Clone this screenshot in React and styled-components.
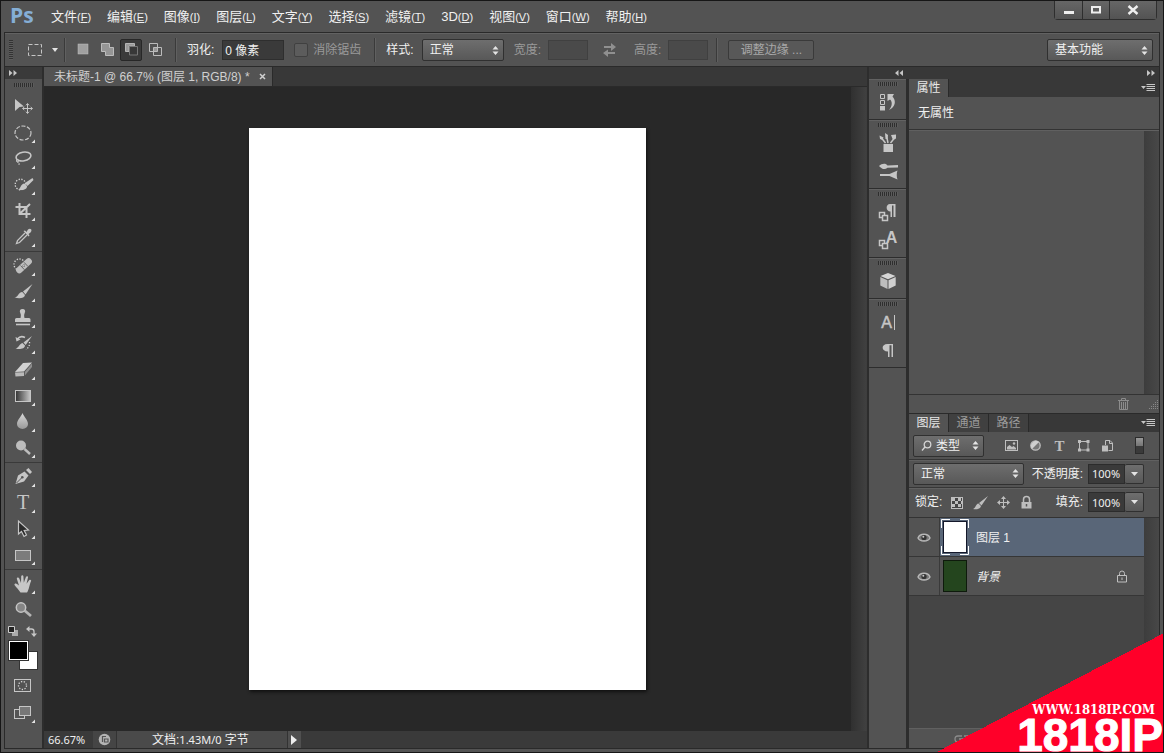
import { Fragment, useState } from "react";
import styled, { createGlobalStyle, css } from "styled-components";

const MENUS = [
    ["文件", "F"],
    ["编辑", "E"],
    ["图像", "I"],
    ["图层", "L"],
    ["文字", "Y"],
    ["选择", "S"],
    ["滤镜", "T"],
    ["3D", "D"],
    ["视图", "V"],
    ["窗口", "W"],
    ["帮助", "H"],
];

const dots = { fill: "none", stroke: "#d4d4d4", strokeWidth: 1.3, strokeDasharray: "1.3 1.5" };

const TOOLS = [
    [
        { name: "移动", single: true, art: (
            <>
                <path d="M5 5L14 12.5L9.5 13L5 17Z" fill="#c6c6c6" />
                <path d="M17.5 10V19M13 14.5H22" stroke="#c6c6c6" />
                <path d="M16 11.3L17.5 9.5L19 11.3M16 17.7L17.5 19.5L19 17.7M14.3 13L12.5 14.5L14.3 16M20.7 13L22.5 14.5L20.7 16" fill="none" stroke="#c6c6c6" />
            </>
        ) },
        { name: "椭圆选框", art: <ellipse cx="13" cy="13" rx="8" ry="7" fill="none" stroke="#c6c6c6" strokeWidth="1.2" strokeDasharray="4 1.6" /> },
        { name: "套索", art: (
            <>
                <ellipse cx="13.5" cy="10.5" rx="7.5" ry="4.3" transform="rotate(-10 13.5 10.5)" fill="none" stroke="#c6c6c6" strokeWidth="1.6" />
                <path d="M7.5 13C5.5 15 7 17 8.5 15.5C10 14 7 12.5 6.5 14.5C7 17 10 16 9 19" fill="none" stroke="#c6c6c6" />
            </>
        ) },
        { name: "快速选择", art: (
            <>
                <circle cx="10.5" cy="12.5" r="5.3" {...dots} />
                <path d="M22.5 6L15 11L17.500 14L23.500 8Z" fill="#c6c6c6" />
                <path d="M14.5 11.5L17.200 14.500C16.500 18 12 18.500 8 17.8C11 16.5 10.500 12 14.5 11.5Z" fill="#c6c6c6" />
            </>
        ) },
        { name: "裁剪", art: <path d="M9.500 5V16H20.5M5.500 9H16.5V20M10 15.500L20 6" fill="none" stroke="#c6c6c6" strokeWidth="2" /> },
        { name: "吸管", art: (
            <>
                <path d="M15 9L7.500 16.5L6.500 19.500L9.5 18.5L17 11" fill="none" stroke="#c6c6c6" strokeWidth="1.3" />
                <path d="M13.5 7L15 6.500L16.500 8L18 5.500Q20 4 21.300 5.500Q22 7 20.500 8.500L18.500 10L19.500 11.5L18.500 12.5Z" fill="#c6c6c6" />
            </>
        ) },
    ],
    [
        { name: "污点修复", art: (
            <>
                <circle cx="9.5" cy="11.5" r="5.5" {...dots} />
                <rect x="4.500" y="9.500" width="19" height="6.500" rx="3" transform="rotate(-43 14 12.8)" fill="#bdbdbd" />
                <path d="M10.5 12.5L14.5 16.8M14 9.300L18 13.500" stroke="#666" />
                <path d="M14 11V15M12 13H16" stroke="#777" strokeDasharray="1 1" />
            </>
        ) },
        { name: "画笔", art: (
            <>
                <path d="M22.500 5L13 12.500L15.500 15.500Z" fill="#c6c6c6" />
                <path d="M12.300 13L15 16C14.500 19.500 9 20 4.500 18.500C8.500 18 8 13.500 12.300 13Z" fill="#c6c6c6" />
            </>
        ) },
        { name: "仿制图章", art: (
            <>
                <path d="M12.500 4C15 4 15.800 6 14.700 8C14 9.500 14 11 14.500 13H19Q20.500 13 20.500 14.500V17H5V14.500Q5 13 6.500 13H10.500C11 11 11 9.500 10.300 8C9.200 6 10 4 12.500 4Z" fill="#c6c6c6" />
                <path d="M6 19.500H20" stroke="#c6c6c6" strokeWidth="1.600" />
            </>
        ) },
        { name: "历史记录画笔", art: (
            <>
                <path d="M22 5L13.500 11.500L15.700 14Z" fill="#c6c6c6" />
                <path d="M12.500 12L15 14.500C15 18 9 18.800 5.500 17.500C9 17 9 13 12.500 12Z" fill="#c6c6c6" />
                <path d="M15 6.500C12 5 9 6 7.500 8" fill="none" stroke="#c6c6c6" strokeWidth="1.500" />
                <path d="M5.500 6L6.500 10.500L10.500 8.500Z" fill="#c6c6c6" />
                <path d="M19.500 11C20 14 18.500 17 16 18.500" {...dots} />
            </>
        ) },
        { name: "橡皮擦", art: (
            <>
                <path d="M5 15L13 6L22 5.500L14 14.500Z" fill="#d2d2d2" />
                <path d="M5 15.600L14 15.200V19L5.500 19.500Z" fill="#b9b9b9" />
                <path d="M14.800 15L22 6.500V10L14.800 18.500Z" fill="#8d8d8d" />
            </>
        ) },
        { name: "渐变", art: <rect x="5.500" y="7.500" width="15" height="11" fill="url(#ramp)" stroke="#c6c6c6" /> },
        { name: "模糊", art: <path d="M12.500 4C14 8 18 11 18 15A5.500 5 0 0 1 7 15C7 11 11 8 12.500 4Z" fill="url(#drop)" /> },
        { name: "减淡", art: (
            <>
                <circle cx="11" cy="10.500" r="5" fill="#bdbdbd" />
                <path d="M14.500 14L20 19" stroke="#bdbdbd" strokeWidth="2.400" />
            </>
        ) },
    ],
    [
        { name: "钢笔", art: (
            <>
                <path d="M5.500 20L8 11.500L14.500 7.500L18.500 11.500L14 17.500Z" fill="#c6c6c6" />
                <path d="M16 6L18.500 4L22 8L20 10Z" fill="#c6c6c6" />
                <path d="M6.500 19L11.500 14" stroke="#555" />
                <circle cx="12.300" cy="13.200" r="1.300" fill="#555" />
            </>
        ) },
        { name: "横排文字", art: <text x="13" y="19" textAnchor="middle" fontFamily="Liberation Serif, serif" fontSize="20" fill="#c6c6c6">T</text> },
        { name: "路径选择", art: <path d="M8.500 5V18L11.500 15.500L14 20.500L16.500 19L14.200 14.500L18.500 14Z" fill="#2a2a2a" stroke="#c6c6c6" strokeWidth="1.200" /> },
        { name: "矩形", art: <rect x="5.500" y="8.500" width="15" height="10" fill="#7c7c7c" stroke="#c6c6c6" /> },
    ],
    [
        { name: "抓手", art: <path d="M10.500 21.500C9 19 6.500 16.500 4.500 14C4 12.500 6 12 7 13L9 14.500L6.800 7.800C6.800 6 8.800 6 9.300 7.500L11 12L11.200 5.200C11.500 3.800 13.200 3.800 13.400 5.200L13.800 11.800L16 5.800C16.800 4.600 18.200 5.200 18 6.500L16.500 12.700L19.300 9C20.500 8.200 21.600 9.200 21 10.300C19.500 13.500 19 19 17 21.500Z" fill="#c6c6c6" /> },
        { name: "缩放", single: true, art: (
            <>
                <circle cx="11" cy="10.500" r="4.700" fill="#858585" stroke="#c6c6c6" strokeWidth="1.500" />
                <path d="M14.500 13.500L21 19" stroke="#b5b5b5" strokeWidth="2.800" />
            </>
        ) },
    ],
];

const DOCK = [
    [
        { name: "历史记录", art: (
            <>
                <path d="M3.500 5.500H7.500V9.500H3.500ZM3.500 11.500H7.500V15.500H3.500Z" fill="none" stroke="#c6c6c6" />
                <path d="M3 17H8V21.500H3Z" fill="#c6c6c6" />
                <path d="M10.500 5H17L15.500 7.500C19.500 12 18.500 18 12 21C15.500 17 15.500 12.500 13 10.500L10.500 12Z" fill="#c6c6c6" />
            </>
        ) },
    ],
    [
        { name: "画笔预设", art: (
            <>
                <path d="M6.500 14H16V22H6.500Z" fill="#c6c6c6" />
                <path d="M8.500 13L4.500 8M11 13L9.500 6M13.500 13L17.500 8" stroke="#c6c6c6" strokeWidth="1.500" />
                <path d="M2.500 5.500L6.500 7.500L5.500 10L3 9ZM8 3L11 5L10.500 9H8.500ZM14 5L19 4.500V8.500L16 10Z" fill="#c6c6c6" />
            </>
        ) },
        { name: "画笔", art: (
            <>
                <path d="M2 8C5 5 9 5 10.500 7.500L21 7V9.500L10.500 9.800C8 12 5 11.500 2 8Z" fill="#c6c6c6" />
                <path d="M3 16H12.500L20.500 12.500C19.500 15 19.500 19 20.500 21.500L12.500 18H3Z" fill="#c6c6c6" />
            </>
        ) },
    ],
    [
        { name: "段落样式", art: (
            <>
                <path d="M18.500 5V18H16.500V6.500H15V18H13.500V12.500C8.500 12.500 8.500 5 13 5Z" fill="#c6c6c6" />
                <path d="M2.500 13.500H7.500V18.500H2.500Z" fill="none" stroke="#c6c6c6" strokeWidth="1.500" />
                <path d="M5.500 16.500H10.500V21.500H5.500Z" fill="#555" stroke="#c6c6c6" strokeWidth="1.500" />
            </>
        ) },
        { name: "字符样式", art: (
            <>
                <text x="14.500" y="16" textAnchor="middle" fontFamily="Liberation Sans, sans-serif" fontSize="16" fontWeight="700" fill="#c6c6c6">A</text>
                <path d="M2.500 13.500H7.500V18.500H2.500Z" fill="none" stroke="#c6c6c6" strokeWidth="1.500" />
                <path d="M5.500 16.500H10.500V21.500H5.500Z" fill="#555" stroke="#c6c6c6" strokeWidth="1.500" />
            </>
        ) },
    ],
    [
        { name: "3D 材质", art: (
            <>
                <path d="M11 5L18.500 8L11 11.300L3.500 8Z" fill="#d6d6d6" />
                <path d="M3.300 9L10.500 12.300V21L3.300 17.500Z" fill="#bdbdbd" />
                <path d="M18.700 9L11.500 12.300V21L18.700 17.500Z" fill="#cfcfcf" />
            </>
        ) },
    ],
    [
        { name: "字符", art: (
            <>
                <text x="9.500" y="19" textAnchor="middle" fontFamily="Liberation Sans, sans-serif" fontSize="16" stroke="#c6c6c6" strokeWidth="0.500" fill="#c6c6c6">A</text>
                <path d="M17.500 6V21" stroke="#c6c6c6" />
            </>
        ) },
        { name: "段落", art: <path d="M16 7V20H14.500V8.200H12.500V20H11V14.500C4 14.500 4 7 10.500 7Z" fill="#c6c6c6" /> },
    ],
];

const SELECTION_MODES = [
    ["新选区", <rect key="a" x="2" y="1" width="10" height="10" fill="#a0a0a0" stroke="#c0c0c0" strokeWidth=".500" />],
    ["添加到选区", <path key="b" d="M1.500 .500H9.500V4.500H13.500V12.500H5.500V8.500H1.500Z" fill="#959595" stroke="#bcbcbc" />],
    ["从选区减去", (
        <Fragment key="c">
            <path d="M1.500 .500H10.500V3H5V8.500H1.500Z" fill="#999" stroke="#b5b5b5" />
            <path d="M5.500 3.500H13.500V12H5.500Z" fill="#383838" stroke="#777" />
        </Fragment>
    )],
    ["与选区交叉", (
        <Fragment key="d">
            <path d="M5.500 4.500H9.500V8.500H5.500Z" fill="#999" />
            <path d="M1.500 .500H9.500V8.500H1.500ZM5.500 4.500H13.500V12.500H5.500Z" fill="none" stroke="#bcbcbc" />
        </Fragment>
    )],
];

const FILTERS = [
    ["像素图层", (
        <>
            <rect x="1.500" y="2.500" width="12" height="10" fill="none" stroke="#bebebe" />
            <path d="M3 11.500V9L5.500 7L8 9L9.500 8L12 10V11.500Z" fill="#bebebe" />
            <circle cx="10" cy="5.500" r="1.200" fill="#bebebe" />
        </>
    )],
    ["调整图层", (
        <>
            <circle cx="7.500" cy="7.500" r="4.700" fill="#777" stroke="#bebebe" strokeWidth="1.300" />
            <path d="M4 11A5 5 0 0 1 11 4Z" fill="#cfcfcf" />
        </>
    )],
    ["文字图层", <text x="7.500" y="12.500" textAnchor="middle" fontFamily="Liberation Serif, serif" fontWeight="700" fontSize="15" fill="#bebebe">T</text>],
    ["形状图层", (
        <>
            <path d="M4 3.500H11M4 12H11M3.500 4V11.500M12 4V11.500" stroke="#bebebe" />
            <path d="M2 2H5V5H2ZM10.500 2H13.500V5H10.500ZM2 10.500H5V13.500H2ZM10.500 10.500H13.500V13.500H10.500Z" fill="#bebebe" />
        </>
    )],
    ["智能对象", (
        <>
            <path d="M5.500 7V2.500H10L12.500 5V12.500H8.500M9.500 2.500V5.500H12.500" fill="none" stroke="#bebebe" />
            <path d="M2 7.500H8V13.500H2Z" fill="#bebebe" />
        </>
    )],
];

const LOCKS = [
    ["锁定透明像素", (
        <>
            <rect x="1.500" y="2.500" width="11" height="11" fill="#454545" stroke="#bebebe" />
            <path d="M2 3H5V6H2ZM8 3H11V6H8ZM5 6H8V9H5ZM11 6H12.500V9H11ZM2 9H5V12H2ZM8 9H11V12H8Z" fill="#bebebe" />
        </>
    )],
    ["锁定图像像素", <path d="M15 1L6 8L8.500 10.500ZM5.500 8.500L8 11C7.500 14.500 3 14.500 0 14C3 13 2.500 9 5.500 8.500Z" fill="#bebebe" />],
    ["锁定位置", (
        <>
            <path d="M7.500 2V13M2 7.500H13" stroke="#bebebe" />
            <path d="M5 4L7.500 1L10 4ZM5 11L7.500 14L10 11ZM4 5L1 7.500L4 10ZM11 5L14 7.500L11 10Z" fill="#bebebe" />
        </>
    )],
    ["锁定全部", (
        <>
            <path d="M4.500 7V4.500A3 3 0 0 1 10.500 4.500V7" fill="none" stroke="#bebebe" strokeWidth="1.500" />
            <path d="M2.500 7H12.500V13.500H2.500Z" fill="#bebebe" />
            <path d="M7.500 9V11.500" stroke="#555" strokeWidth="1.500" />
        </>
    )],
];

const Dropdown = ({ id, label, options, width, lens }) => (
    <SelectBox $width={width}>
        {lens && (
            <svg width="11" height="12" viewBox="0 0 11 12" fill="none" stroke="#d4d4d4" strokeWidth="1.300">
                <circle cx="6.500" cy="4.500" r="3.300" />
                <path d="M4 7L1 10.500" />
            </svg>
        )}
        <Select id={id} aria-label={label} defaultValue={options[0]}>
            {options.map((option) => <option key={option}>{option}</option>)}
        </Select>
        <svg width="7" height="9" viewBox="0 0 7 9" fill="#e4e4e4">
            <path d="M.500 3.500L3.500 0L6.500 3.500ZM.500 5.500L3.500 9L6.500 5.500Z" />
        </svg>
    </SelectBox>
);

const Percent = ({ id, label }) => (
    <PercentField>
        <label htmlFor={id}>{label}:</label>
        <PercentInput id={id} defaultValue="100%" />
        <ArrowButton aria-label={`${label}滑块`}>
            <svg width="7" height="4" viewBox="0 0 7 4" fill="#e4e4e4"><path d="M0 0H7L3.500 4Z" /></svg>
        </ArrowButton>
    </PercentField>
);

const PanelMenu = () => (
    <PlainButton aria-label="面板菜单">
        <svg width="14" height="9" viewBox="0 0 14 9">
            <path d="M0 2H5L2.500 5Z" fill="#c6c6c6" />
            <path d="M5.500 .500H14M5.500 2.500H14M5.500 4.500H14M5.500 6.500H14" stroke="#c6c6c6" />
        </svg>
    </PlainButton>
);

const Chevrons = ({ left }) => (
    <svg width="8" height="6" viewBox="0 0 8 6" fill="#c6c6c6">
        <path d={left ? "M3.500 0V6L0 3ZM8 0V6L4.500 3Z" : "M0 0V6L3.500 3ZM4.500 0V6L8 3Z"} />
    </svg>
);

const Eye = () => (
    <svg width="14" height="11" viewBox="0 0 14 11">
        <path d="M1 6C3 1 11 1 13 6C11 10 3 10 1 6Z" fill="#777" stroke="#b8b8b8" strokeWidth="1.400" />
        <circle cx="7" cy="5.500" r="2.600" fill="#333" />
        <circle cx="6.300" cy="4.800" r="1" fill="#c8c8c8" />
    </svg>
);

const TitleBar = () => (
    <Title>
        <Logo>Ps</Logo>
        <Menus>
            {MENUS.map(([text, key]) => (
                <MenuButton key={key}>{text}<small>(<u>{key}</u>)</small></MenuButton>
            ))}
        </Menus>
        <WindowButtons>
            <WindowButton $width={28} aria-label="最小化">
                <svg width="12" height="12" viewBox="0 0 12 12"><path d="M1 7H11V10H1Z" fill="#eee" /></svg>
            </WindowButton>
            <WindowButton $width={27} aria-label="最大化">
                <svg width="12" height="12" viewBox="0 0 12 12"><path d="M2 3H10V8.500H2Z" fill="none" stroke="#eee" strokeWidth="2" /></svg>
            </WindowButton>
            <WindowButton $width={46} aria-label="关闭">
                <svg width="12" height="12" viewBox="0 0 12 12"><path d="M1.500 2L10.500 10M10.500 2L1.500 10" stroke="#eee" strokeWidth="2.400" /></svg>
            </WindowButton>
        </WindowButtons>
    </Title>
);

const OptionsBar = () => {
    const [mode, setMode] = useState(2);

    return (
        <Options>
            <GripTall />
            <Preset aria-label="工具预设">
                <svg width="16" height="14" viewBox="0 0 16 14"><rect x="1.500" y="1.500" width="13" height="11" fill="none" stroke="#c6c6c6" strokeDasharray="4 2" /></svg>
                <svg width="6" height="4" viewBox="0 0 6 4" fill="#e4e4e4"><path d="M0 0H6L3 4Z" /></svg>
            </Preset>
            <Separator />
            <Modes>
                {SELECTION_MODES.map(([name, art], i) => (
                    <ModeButton key={name} aria-label={name} $on={mode === i} onClick={() => setMode(i)}>
                        <svg width="15" height="15" viewBox="0 0 15 15">{art}</svg>
                    </ModeButton>
                ))}
            </Modes>
            <Separator />
            <Field>
                <label htmlFor="feather">羽化:</label>
                <TextInput id="feather" $width={62} defaultValue="0 像素" />
            </Field>
            <CheckField>
                <Check id="smooth" type="checkbox" disabled />
                <label htmlFor="smooth">消除锯齿</label>
            </CheckField>
            <Separator />
            <Field>
                <label htmlFor="style">样式:</label>
                <Dropdown id="style" options={["正常", "固定比例", "固定大小"]} width={82} />
            </Field>
            <SizeField>
                <label htmlFor="w">宽度:</label>
                <TextInput id="w" $width={40} disabled />
            </SizeField>
            <Swap aria-label="高度和宽度互换" disabled>
                <svg width="15" height="14" viewBox="0 0 15 14" fill="#909090">
                    <path d="M2 3H9V0L14 4L9 8V5H2ZM13 9H6V6.500L1 10L6 14V11H13Z" />
                </svg>
            </Swap>
            <SizeField>
                <label htmlFor="h">高度:</label>
                <TextInput id="h" $width={40} disabled />
            </SizeField>
            <Separator />
            <Refine disabled>调整边缘 ...</Refine>
            <Spring />
            <Dropdown label="工作区" options={["基本功能", "绘画", "摄影"]} width={106} />
        </Options>
    );
};

const Toolbox = () => (
    <Tools>
        <StripHeader><Chevrons /></StripHeader>
        <Grip />
        {TOOLS.map((group, i) => (
            <ToolGroup key={i}>
                {group.map((tool) => (
                    <ToolButton key={tool.name} aria-label={tool.name}>
                        <svg width="26" height="26" viewBox="0 0 26 26">
                            {tool.art}
                            {!tool.single && <path d="M25 19.500V23H21.500Z" fill="#e4e4e4" />}
                        </svg>
                    </ToolButton>
                ))}
            </ToolGroup>
        ))}
        <ColorActions>
            <PlainButton aria-label="默认颜色">
                <svg width="11" height="11" viewBox="0 0 11 11">
                    <path d="M4 4H10V10H4Z" fill="#aaa" />
                    <path d="M.500.500H6.500V6.500H.500Z" fill="#222" stroke="#ccc" />
                </svg>
            </PlainButton>
            <PlainButton aria-label="切换颜色">
                <svg width="11" height="11" viewBox="0 0 11 11">
                    <path d="M3 3H5.500Q8 3 8 5.500V8" fill="none" stroke="#c6c6c6" strokeWidth="1.300" />
                    <path d="M0 3L3.500 0V6ZM5 7.500H11L8 11Z" fill="#c6c6c6" />
                </svg>
            </PlainButton>
        </ColorActions>
        <Swatches>
            <Swatch $color="#fff" aria-label="背景色" />
            <Swatch $color="#000" $front aria-label="前景色" />
        </Swatches>
        <ToolButton aria-label="快速蒙版">
            <svg width="26" height="26" viewBox="0 0 26 26">
                <rect x="4.500" y="6.500" width="16" height="12" fill="none" stroke="#c6c6c6" />
                <circle cx="12.500" cy="12.500" r="4" {...dots} />
            </svg>
        </ToolButton>
        <ToolButton aria-label="屏幕模式">
            <svg width="26" height="26" viewBox="0 0 26 26">
                <rect x="4.500" y="10.500" width="10" height="9" fill="#555" stroke="#c6c6c6" />
                <rect x="9.500" y="7.500" width="11" height="9" fill="#777" stroke="#c6c6c6" />
                <path d="M25 20.500V24H21.500Z" fill="#e4e4e4" />
            </svg>
        </ToolButton>
    </Tools>
);

const DocumentArea = () => (
    <Document>
        <DocTabs>
            <DocTab>
                <span>未标题-1 @ 66.7% (图层 1, RGB/8) *</span>
                <PlainButton aria-label="关闭文档">
                    <svg width="7" height="7" viewBox="0 0 7 7"><path d="M1 1L6 6M6 1L1 6" stroke="#d0d0d0" strokeWidth="1.500" /></svg>
                </PlainButton>
            </DocTab>
        </DocTabs>
        <Stage>
            <Pasteboard><Paper /></Pasteboard>
            <DocScroll />
        </Stage>
        <Status>
            <Zoom>66.67%</Zoom>
            <StatusIcon aria-label="同步">
                <svg width="13" height="13" viewBox="0 0 13 13">
                    <circle cx="6.500" cy="6.500" r="5.800" fill="#b4b4b4" />
                    <path d="M4.500 9V3.500H8M6.500 6V9H10V6Z" fill="none" stroke="#555" strokeWidth="1.200" />
                </svg>
            </StatusIcon>
            <StatusText>文档:<span>1.43M/0</span> 字节</StatusText>
            <StatusArrow aria-label="状态栏选项">
                <svg width="7" height="10" viewBox="0 0 7 10" fill="#eee"><path d="M0 0V10L6 5Z" /></svg>
            </StatusArrow>
        </Status>
    </Document>
);

const PropertiesPanel = () => (
    <Panel>
        <Tabs>
            <Tab $on>属性</Tab>
            <Spring />
            <PanelMenu />
        </Tabs>
        <PropertyTitle>无属性</PropertyTitle>
        <PanelBody><Spring /><PanelScroll /></PanelBody>
        <PropertyFooter>
            <PlainButton aria-label="删除">
                <svg width="11" height="12" viewBox="0 0 11 12" fill="none" stroke="#8c8c8c">
                    <path d="M0 2.500H11M3.500 2V.500H7.500V2M1.500 3V11.500H9.500V3M3.500 4V11M5.500 4V11M7.500 4V11" />
                </svg>
            </PlainButton>
            <svg width="10" height="10" viewBox="0 0 10 10" stroke="#888" strokeDasharray="1 1">
                <path d="M8 1.500H9M6 3.500H9M4 5.500H9M2 7.500H9M0 9.500H9" />
            </svg>
        </PropertyFooter>
    </Panel>
);

const LayersPanel = () => (
    <Panel>
        <Tabs>
            <Tab $on>图层</Tab>
            <Tab>通道</Tab>
            <Tab>路径</Tab>
            <Spring />
            <PanelMenu />
        </Tabs>
        <ControlRow>
            <Dropdown label="滤镜类型" options={["类型", "名称", "效果"]} width={71} lens />
            <FilterIcons>
                {FILTERS.map(([name, art]) => (
                    <PlainButton key={name} aria-label={name}>
                        <svg width="15" height="15" viewBox="0 0 15 15">{art}</svg>
                    </PlainButton>
                ))}
            </FilterIcons>
            <Toggle aria-label="打开或关闭图层过滤" />
        </ControlRow>
        <ControlRow>
            <Dropdown label="混合模式" options={["正常", "溶解", "正片叠底"]} width={111} />
            <Percent id="opacity" label="不透明度" />
        </ControlRow>
        <ControlRow $last>
            <LockGroup>
                <span>锁定:</span>
                {LOCKS.map(([name, art]) => (
                    <PlainButton key={name} aria-label={name}>
                        <svg width="15" height="15" viewBox="0 0 15 15">{art}</svg>
                    </PlainButton>
                ))}
            </LockGroup>
            <Percent id="fill" label="填充" />
        </ControlRow>
        <PanelBody $dark>
            <LayerList>
                <Layer $selected>
                    <Visibility aria-label="图层 1 可见"><Eye /></Visibility>
                    <Thumb>
                        <svg width="28" height="36" viewBox="0 0 28 36">
                            <rect x="2.500" y="2.500" width="23" height="31" fill="#fff" stroke="#14182a" />
                            <path d="M.500 9V.500H9M19 .500H27.500V9M27.500 27V35.500H19M9 35.500H.500V27" fill="none" stroke="#fff" />
                        </svg>
                    </Thumb>
                    <LayerName>图层 1</LayerName>
                </Layer>
                <Layer>
                    <Visibility aria-label="背景 可见"><Eye /></Visibility>
                    <Thumb>
                        <svg width="28" height="36" viewBox="0 0 28 36">
                            <rect x="2.500" y="2.500" width="23" height="31" fill="#24451e" stroke="#0e1a0c" />
                        </svg>
                    </Thumb>
                    <LayerName $italic>背景</LayerName>
                    <svg width="12" height="13" viewBox="0 0 12 13" fill="none" stroke="#c0c0c0">
                        <path d="M3.500 5.500V3.500A2.500 2.500 0 0 1 8.500 3.500V5.500M1.500 5.500H10.500V12H1.500ZM6 7.500V10" />
                    </svg>
                </Layer>
            </LayerList>
            <PanelScroll />
        </PanelBody>
        <LayerFooter>
            <PlainButton aria-label="链接图层">
                <svg width="18" height="10" viewBox="0 0 18 10" fill="none" stroke="#8c8c8c" strokeWidth="1.300">
                    <path d="M8 2H4Q1 2 1 5Q1 8 4 8H8M10 2H14Q17 2 17 5Q17 8 14 8H10M5 5H13" />
                </svg>
            </PlainButton>
        </LayerFooter>
    </Panel>
);

export default function App() {
    return (
        <Window>
            <GlobalStyle />
            <Gradients width="0" height="0">
                <defs>
                    <linearGradient id="ramp"><stop offset="0" stopColor="#333" /><stop offset="1" stopColor="#c8c8c8" /></linearGradient>
                    <linearGradient id="drop" x2="0" y2="1"><stop offset="0" stopColor="#d8d8d8" /><stop offset="1" stopColor="#999" /></linearGradient>
                </defs>
            </Gradients>
            <TitleBar />
            <Frame>
                <OptionsBar />
                <Workspace>
                    <Toolbox />
                    <DocumentArea />
                    <Side>
                        <SideHeader><Chevrons left /><Chevrons /></SideHeader>
                        <SideBody>
                            <Dock>
                                {DOCK.map((group, i) => (
                                    <DockGroup key={i}>
                                        <Grip />
                                        {group.map((item) => (
                                            <DockButton key={item.name} aria-label={item.name}>
                                                <svg width="22" height="26" viewBox="0 0 22 26">{item.art}</svg>
                                            </DockButton>
                                        ))}
                                    </DockGroup>
                                ))}
                            </Dock>
                            <Panels>
                                <PropertiesPanel />
                                <LayersPanel />
                            </Panels>
                        </SideBody>
                    </Side>
                </Workspace>
            </Frame>
            <Watermark>
                <Site>WWW.1818IP.COM</Site>
                <Brand>1818IP</Brand>
            </Watermark>
        </Window>
    );
}

const GlobalStyle = createGlobalStyle`
    *, *::before {
        box-sizing: border-box;
    }
    body {
        margin: 0;
        color: #f0f0f0;
        background: #151515;
        font: 12px "Liberation Sans", "Noto Sans CJK SC", sans-serif;
        line-height: 16px;
    }
    button, input, select {
        font: inherit;
        color: inherit;
        margin: 0;
        padding: 0;
    }
    svg {
        display: block;
        flex: none;
    }
`;

const raised = css`
    background: linear-gradient(#6e6e6e, #585858);
    border: 1px solid #303030;
    border-radius: 2px;
`;

const Window = styled.main`
    position: relative;
    display: flex;
    flex-direction: column;
    height: 100vh;
    padding: 0 3px 3px;
    overflow: hidden;
    background: #535353;
    border: 1px solid #161616;
`;
const Gradients = styled.svg`
    position: absolute;
`;
const Title = styled.header`
    display: flex;
    align-items: flex-start;
    height: 31px;
    flex: none;
`;
const Logo = styled.div`
    width: 38px;
    padding-left: 6px;
    color: #85aed6;
    font: 700 21px/28px "Open Sans", sans-serif;
`;
const Menus = styled.nav`
    display: flex;
    gap: 16px;
    padding: 7px 0 0 9px;
`;
const MenuButton = styled.button`
    border: none;
    background: none;
    font-size: 13px;
    line-height: 17px;
    white-space: nowrap;

    small {
        font-size: 11px;
    }
`;
const WindowButtons = styled.div`
    display: flex;
    margin-left: auto;
    margin-right: 3px;
    border: 1px solid #2e2e2e;
    border-top: none;
    border-radius: 0 0 4px 4px;
`;
const WindowButton = styled.button`
    display: grid;
    place-items: center;
    width: ${(props) => props.$width}px;
    height: 18px;
    background: linear-gradient(#666, #535353);
    border: none;
    border-right: 1px solid #2e2e2e;

    &:last-child {
        border-right: none;
    }
`;
const Frame = styled.div`
    display: flex;
    flex-direction: column;
    flex: 1;
    min-height: 0;
    border: 1px solid #2a2a2a;
`;
const Options = styled.div`
    display: flex;
    align-items: center;
    flex: none;
    height: 34px;
    padding: 0 6px 0 4px;
    border-top: 1px solid #626262;
    border-bottom: 1px solid #2a2a2a;
    white-space: nowrap;
`;
const GripTall = styled.div`
    width: 4px;
    height: 20px;
    margin-right: 14px;
    background: repeating-linear-gradient(#333 0 1px, #5c5c5c 1px 2px);
`;
const Preset = styled.button`
    display: flex;
    align-items: center;
    gap: 9px;
    margin-right: 6px;
    border: none;
    background: none;
`;
const Separator = styled.i`
    width: 2px;
    height: 24px;
    margin-right: 10px;
    background: #3a3a3a;
    border-right: 1px solid #606060;
`;
const Modes = styled.div`
    display: flex;
    gap: 2px;
    margin: 0 9px 0 -4px;
`;
const ModeButton = styled.button`
    display: grid;
    place-items: center;
    width: 22px;
    height: 22px;
    border: 1px solid ${(props) => (props.$on ? "#272727" : "transparent")};
    border-radius: 2px;
    background: ${(props) => (props.$on ? "#3a3a3a" : "none")};
`;
const Field = styled.div`
    display: flex;
    align-items: center;
    gap: 8px;
    margin-right: 10px;
`;
const CheckField = styled(Field)`
    gap: 5px;
    margin-right: 13px;
    color: #9a9a9a;
`;
const SizeField = styled(Field)`
    gap: 7px;
    margin-right: 8px;
    color: #9a9a9a;
`;
const TextInput = styled.input`
    width: ${(props) => props.$width}px;
    height: 20px;
    padding: 0 0 2px 2px;
    background: #3a3a3a;
    border: 1px solid #2e2e2e;

    &:disabled {
        background: #4a4a4a;
        border-color: #404040;
    }
`;
const Check = styled.input`
    appearance: none;
    width: 14px;
    height: 14px;
    border: 1px solid #404040;
    border-radius: 2px;
    background: #5c5c5c;
`;
const SelectBox = styled.div`
    display: flex;
    align-items: center;
    gap: 4px;
    width: ${(props) => props.$width}px;
    height: 22px;
    padding: 0 4px 0 7px;
    ${raised}
`;
const Select = styled.select`
    flex: 1;
    min-width: 0;
    appearance: none;
    border: none;
    background: none;
`;
const Swap = styled.button`
    margin: 0 17px 0 6px;
    border: none;
    background: none;
`;
const Refine = styled.button`
    width: 86px;
    height: 20px;
    background: #585858;
    border: 1px solid #3a3a3a;
    border-radius: 2px;
    color: #a8a8a8;
`;
const Spring = styled.span`
    flex: 1;
`;
const Workspace = styled.div`
    display: flex;
    flex: 1;
    min-height: 0;
`;
const Tools = styled.aside`
    display: flex;
    flex-direction: column;
    flex: none;
    width: 39px;
    border-right: 2px solid #2d2d2d;
`;
const StripHeader = styled.div`
    display: flex;
    align-items: center;
    height: 12px;
    padding-left: 4px;
    background: #3a3a3a;
`;
const Grip = styled.div`
    flex: none;
    width: 20px;
    height: 4px;
    margin: 4px auto 7px 9px;
    background: repeating-linear-gradient(90deg, #2e2e2e 0 1px, #5c5c5c 1px 2px);
`;
const ToolGroup = styled.div`
    & + & {
        margin-top: 1px;
        padding-top: 1px;
        border-top: 1px solid #3a3a3a;
    }
`;
const ToolButton = styled.button`
    display: block;
    width: 37px;
    height: 26px;
    padding-left: 5px;
    border: none;
    background: none;
    flex: none;
`;
const ColorActions = styled.div`
    display: flex;
    gap: 7px;
    padding: 3px 0 0 3px;
`;
const PlainButton = styled.button`
    border: none;
    background: none;
`;
const Swatches = styled.div`
    display: grid;
    grid-template: repeat(3, 10px) / repeat(3, 10px);
    margin: 4px 0 2px 4px;
`;
const Swatch = styled.button`
    grid-area: ${(props) => (props.$front ? "1 / 1 / 3 / 3" : "2 / 2 / 4 / 4")};
    width: 19px;
    height: 19px;
    background: ${(props) => props.$color};
    border: 1px solid ${(props) => (props.$front ? "#fff" : "#333")};
    outline: ${(props) => (props.$front ? "1px solid #333" : "none")};
`;
const Document = styled.section`
    display: flex;
    flex-direction: column;
    flex: 1;
    min-width: 0;
`;
const DocTabs = styled.div`
    display: flex;
    height: 20px;
    background: #383838;
    border-bottom: 1px solid #2a2a2a;
`;
const DocTab = styled.div`
    display: flex;
    align-items: center;
    gap: 9px;
    height: 19px;
    padding: 0 6px 0 10px;
    background: #535353;
    border-right: 1px solid #2a2a2a;
    color: #d0d0d0;
`;
const Stage = styled.div`
    display: flex;
    flex: 1;
    min-height: 0;
    background: #282828;
`;
const Pasteboard = styled.div`
    display: grid;
    place-items: center;
    flex: 1;
`;
const Paper = styled.div`
    width: 397px;
    height: 562px;
    background: #fff;
    box-shadow: 1px 2px 3px #111;
`;
const DocScroll = styled.div`
    width: 16px;
    background: linear-gradient(90deg, #303030, #404040);
    border-right: 1px solid #3e3e3e;
`;
const Status = styled.footer`
    display: flex;
    height: 17px;
    line-height: 18px;
    background: #3a3a3a;
`;
const Zoom = styled.div`
    width: 49px;
    padding-left: 4px;
    font: 11px/17px "Noto Sans", sans-serif;
`;
const StatusIcon = styled.button`
    display: grid;
    place-items: center;
    width: 24px;
    background: #454545;
    border: none;
    border-right: 1px solid #333;
`;
const StatusText = styled.div`
    width: 170px;
    padding-left: 35px;
    background: #4a4a4a;

    span {
        font: 11px "Noto Sans", sans-serif;
    }
`;
const StatusArrow = styled.button`
    display: grid;
    place-items: center;
    width: 14px;
    background: #505050;
    border: none;
    border-left: 1px solid #333;
`;
const Side = styled.aside`
    display: flex;
    flex-direction: column;
    flex: none;
    width: 292px;
    border-left: 2px solid #2d2d2d;
`;
const SideHeader = styled.div`
    display: flex;
    align-items: center;
    justify-content: space-between;
    height: 12px;
    padding: 0 4px 0 26px;
    background: #383838;
`;
const SideBody = styled.div`
    display: flex;
    flex: 1;
    min-height: 0;
`;
const Dock = styled.div`
    flex: none;
    width: 40px;
    border-right: 3px solid #2d2d2d;
`;
const DockGroup = styled.div`
    padding: 0 0 3px;
    border-bottom: 1px solid #2d2d2d;

    ${Grip} {
        margin: 0 auto 2px 9px;
    }
    &::before {
        content: "";
        display: block;
        height: 3px;
        border-top: 1px solid #626262;
    }
`;
const DockButton = styled.button`
    display: grid;
    place-items: center;
    width: 37px;
    height: 28px;
    border: none;
    background: none;
`;
const Panels = styled.div`
    display: flex;
    flex-direction: column;
    flex: 1;
    gap: 1px;
    min-width: 0;
    background: #2a2a2a;
`;
const Panel = styled.section`
    display: flex;
    flex-direction: column;
    flex: 1 1 0;
    min-height: 0;
    background: #535353;
`;
const Tabs = styled.div`
    display: flex;
    height: 18px;
    padding-right: 4px;
    background: #383838;
`;
const Tab = styled.button`
    width: 40px;
    border: none;
    border-right: 1px solid #2a2a2a;
    background: ${(props) => (props.$on ? "#535353" : "#404040")};
    color: ${(props) => (props.$on ? "#e8e8e8" : "#9c9c9c")};
`;
const PropertyTitle = styled.h2`
    height: 33px;
    margin: 0;
    padding: 8px 9px;
    font-size: 12px;
    font-weight: 400;
    border-bottom: 1px solid #333;
`;
const PanelBody = styled.div`
    display: flex;
    flex: 1;
    min-height: 0;
    background: ${(props) => (props.$dark ? "#454545" : "#535353")};
    border-top: 1px solid ${(props) => (props.$dark ? "#333" : "#606060")};
`;
const PanelScroll = styled.div`
    width: 15px;
    background: linear-gradient(90deg, #3d3d3d, #484848);
`;
const PropertyFooter = styled.div`
    display: flex;
    align-items: center;
    justify-content: flex-end;
    gap: 20px;
    height: 19px;
    border-top: 1px solid #333;
`;
const ControlRow = styled.div`
    display: flex;
    align-items: center;
    height: ${(props) => (props.$last ? 29 : 28)}px;
    padding: 0 15px ${(props) => (props.$last ? 1 : 0)}px 4px;
    border-bottom: ${(props) => (props.$last ? "none" : "1px solid #363636")};
    box-shadow: ${(props) => (props.$last ? "none" : "0 1px #606060")};
`;
const FilterIcons = styled.div`
    display: flex;
    gap: 9px;
    margin-left: 20px;
`;
const Toggle = styled.button`
    width: 9px;
    height: 17px;
    margin-left: auto;
    border: 1px solid #2c2c2c;
    background: linear-gradient(#999, #777 50%, #3a3a3a 50%);
`;
const PercentField = styled.div`
    display: flex;
    align-items: center;
    margin-left: auto;
    white-space: nowrap;
`;
const PercentInput = styled.input`
    width: 37px;
    height: 20px;
    margin-left: 5px;
    padding-left: 3px;
    border: 1px solid #2c2c2c;
    background: #3a3a3a;
    font: 11px "Noto Sans", sans-serif;
`;
const ArrowButton = styled.button`
    display: grid;
    place-items: center;
    width: 19px;
    height: 20px;
    ${raised}
    border-left: none;
`;
const LockGroup = styled.div`
    display: flex;
    align-items: center;
    gap: 8px;
    padding-left: 2px;
`;
const LayerList = styled.ul`
    flex: 1;
    margin: 0;
    padding: 0;
    list-style: none;
`;
const Layer = styled.li`
    display: flex;
    align-items: center;
    height: 39px;
    padding-right: 16px;
    border-bottom: 1px solid #363636;
    background: ${(props) => (props.$selected ? "#596678" : "#535353")};
`;
const Visibility = styled.button`
    display: grid;
    place-items: center;
    width: 31px;
    height: 100%;
    border: none;
    border-right: 1px solid #3a3a3a;
    background: #535353;
`;
const Thumb = styled.div`
    padding: 0 7px 0 1px;
`;
const LayerName = styled.span`
    flex: 1;
    padding-top: 2px;
    font-style: ${(props) => (props.$italic ? "italic" : "normal")};
`;
const LayerFooter = styled.div`
    display: flex;
    align-items: center;
    height: 20px;
    padding-left: 45px;
    border-top: 1px solid #606060;
`;
const Watermark = styled.div`
    position: absolute;
    right: -1px;
    bottom: -1px;
    display: flex;
    flex-direction: column;
    align-items: flex-end;
    justify-content: flex-end;
    width: 229px;
    height: 120px;
    background: linear-gradient(to bottom right, transparent 50%, #ff0029 50%);
    color: #fff;
`;
const Site = styled.div`
    padding-right: 9px;
    font: 700 13px/14px "DejaVu Serif Condensed", "DejaVu Serif", serif;
`;
const Brand = styled.div`
    padding-right: 1px;
    font: 700 46px/36px "Liberation Sans", sans-serif;
    -webkit-text-stroke: 1px #fff;
`;
